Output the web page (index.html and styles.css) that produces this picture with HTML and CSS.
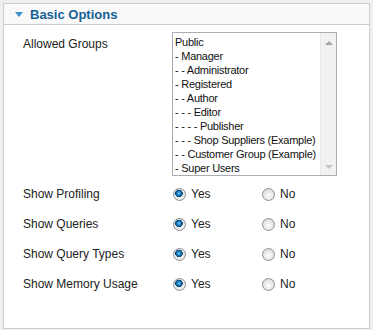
FILE: index.html
```html
<!DOCTYPE html>
<html lang="en">
<head>
    <meta charset="UTF-8" />
    <title>Basic Options</title>
    <link rel="stylesheet" href="styles.css">
</head>
<body>
    <div class="panel">
        <div class="panel-head">
            <span class="toggle-arrow"></span>
            <h3 class="panel-title">Basic Options</h3>
        </div>

        <div class="panel-body">
            <div class="field">
                <label class="field-label">Allowed Groups</label>
                <div class="listbox">
                    <ul class="listbox-items">
                        <li>Public</li>
                        <li>- Manager</li>
                        <li>- - Administrator</li>
                        <li>- Registered</li>
                        <li>- - Author</li>
                        <li>- - - Editor</li>
                        <li>- - - - Publisher</li>
                        <li>- - - Shop Suppliers (Example)</li>
                        <li>- - Customer Group (Example)</li>
                        <li>- Super Users</li>
                    </ul>
                    <div class="scrollbar">
                        <span class="scroll-up"></span>
                        <span class="scroll-down"></span>
                    </div>
                </div>
            </div>

            <div class="field radio-field first">
                <label class="field-label">Show Profiling</label>
                <label class="option"><input type="radio" name="profiling" checked> Yes</label>
                <label class="option"><input type="radio" name="profiling"> No</label>
            </div>
            <div class="field radio-field">
                <label class="field-label">Show Queries</label>
                <label class="option"><input type="radio" name="queries" checked> Yes</label>
                <label class="option"><input type="radio" name="queries"> No</label>
            </div>
            <div class="field radio-field">
                <label class="field-label">Show Query Types</label>
                <label class="option"><input type="radio" name="types" checked> Yes</label>
                <label class="option"><input type="radio" name="types"> No</label>
            </div>
            <div class="field radio-field">
                <label class="field-label">Show Memory Usage</label>
                <label class="option"><input type="radio" name="memory" checked> Yes</label>
                <label class="option"><input type="radio" name="memory"> No</label>
            </div>
        </div>
    </div>
</body>
</html>
```

FILE: styles.css
```css
body {
    margin: 0;
    padding: 3px;
    background-color: #f0f0f0;
    font-family: Arial, "Liberation Sans", sans-serif;
    font-size: 12px;
    color: #222;
}

.panel {
    height: 326px;
    box-sizing: border-box;
    border: 1px solid #cccccc;
    background-color: #fff;
}

.panel-head {
    display: flex;
    align-items: center;
    gap: 7px;
    height: 20px;
    padding-left: 11px;
    background-color: #f9f9f9;
    border-bottom: 1px solid #cccccc;
}

.toggle-arrow {
    width: 0;
    height: 0;
    border-left: 4px solid transparent;
    border-right: 4px solid transparent;
    border-top: 5px solid #3a8fd0;
}

.panel-title {
    margin: 0;
    font-size: 13px;
    font-weight: bold;
    color: #146295;
}

.panel-body {
    padding: 7px 0 0 19px;
}

.field {
    display: flex;
}

.field-label {
    width: 149px;
    flex-shrink: 0;
    padding-top: 5px;
    line-height: 14px;
}

.listbox {
    display: flex;
    width: 165px;
    height: 144px;
    box-sizing: border-box;
    border: 1px solid #abadb3;
}

.listbox-items {
    flex: 1;
    margin: 0;
    padding: 2px 0 0 2px;
    list-style: none;
    font-size: 11px;
    line-height: 14px;
    letter-spacing: -0.25px;
    color: #111;
    overflow: hidden;
    white-space: nowrap;
}

.scrollbar {
    display: flex;
    flex-direction: column;
    justify-content: space-between;
    align-items: center;
    width: 16px;
    flex-shrink: 0;
    padding: 8px 0 6px;
    box-sizing: border-box;
    background-color: #f1f1f1;
    border-left: 1px solid #e8e8e8;
}

.scroll-up,
.scroll-down {
    width: 0;
    height: 0;
    border-left: 4px solid transparent;
    border-right: 4px solid transparent;
}

.scroll-up {
    border-bottom: 4px solid #a3a3a3;
}

.scroll-down {
    border-top: 4px solid #c4c4c4;
}

.radio-field {
    height: 30px;
    align-items: center;
}

.radio-field.first {
    margin-top: 3px;
}

.radio-field .field-label {
    padding-top: 0;
}

.option {
    display: flex;
    align-items: center;
    gap: 5px;
    width: 88px;
    padding-left: 1px;
}

.option input {
    appearance: none;
    -webkit-appearance: none;
    margin: 0;
    width: 13px;
    height: 13px;
    border-radius: 50%;
    border: 1px solid #8e8f8f;
    box-sizing: border-box;
    background: radial-gradient(circle at 50% 60%, #fdfdfd 0, #e4e4e4 60%, #cfcfcf 100%);
}

.option input:checked {
    background:
        radial-gradient(circle at 45% 40%, #8fd2f7 0, #2a8ccb 1.5px, #0b5a94 3px, #0a3e6a 3.6px, transparent 4px),
        radial-gradient(circle, #f6f6f6 0, #e2e2e2 100%);
}
```
